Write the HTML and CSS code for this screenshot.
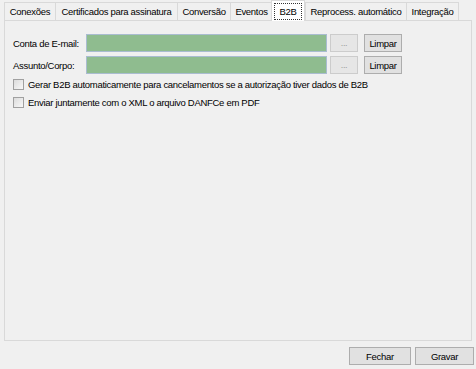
FILE: index.html
```html
<!DOCTYPE html>
<html>
<head>
<meta charset="utf-8">
<link rel="stylesheet" href="styles.css">
</head>
<body>
<div class="window">
  <div class="tabs">
    <div class="tab w-con">Conexões</div>
    <div class="tab w-cert">Certificados para assinatura</div>
    <div class="tab w-conv">Conversão</div>
    <div class="tab w-ev">Eventos</div>
    <div class="tab active"><span class="focus">B2B</span></div>
    <div class="tab w-rep">Reprocess. automático</div>
    <div class="tab w-int">Integração</div>
  </div>
  <div class="panel">
    <div class="row">
      <label class="label">Conta de E-mail:</label>
      <div class="input"></div>
      <button class="btn dots">...</button>
      <button class="btn clear">Limpar</button>
    </div>
    <div class="row">
      <label class="label">Assunto/Corpo:</label>
      <div class="input"></div>
      <button class="btn dots">...</button>
      <button class="btn clear">Limpar</button>
    </div>
    <div class="check first"><span class="box"></span>Gerar B2B automaticamente para cancelamentos se a autorização tiver dados de B2B</div>
    <div class="check"><span class="box"></span>Enviar juntamente com o XML o arquivo DANFCe em PDF</div>
  </div>
  <div class="footer">
    <button class="btn big">Fechar</button>
    <button class="btn big gravar">Gravar</button>
  </div>
</div>
</body>
</html>
```

FILE: styles.css
```css
* { box-sizing: border-box; }
html, body { margin: 0; padding: 0; }
body {
  background: #f0f0f0;
  font-family: "Liberation Sans", Arial, sans-serif;
  font-size: 9.5px;
  letter-spacing: -0.3px;
  color: #000;
}
.window {
  width: 476px;
  height: 369px;
  padding: 0 4px 0 4px;
  display: flex;
  flex-direction: column;
}
.tabs {
  display: flex;
  height: 20px;
  padding-top: 2px;
  align-items: flex-end;
  position: relative;
  z-index: 1;
}
.tab {
  height: 18px;
  border: 1px solid #d9d9d9;
  border-bottom: none;
  margin-right: -1px;
  background: #f0f0f0;
  line-height: 17px;
  white-space: nowrap;
  text-align: center;
  overflow: hidden;
}
.w-con { width: 52px; }
.w-cert { width: 123px; }
.w-conv { width: 54px; }
.w-ev { width: 43px; }
.w-rep { width: 102px; }
.w-int { width: 53px; }
.tab.active {
  width: 34px;
  height: 21px;
  margin: 0 0 -1px -1px;
  background: #fff;
  padding: 2px 2px 0 2px;
  border-color: #d9d9d9;
  position: relative;
}
.focus {
  display: block;
  border: 1px dotted #333;
  line-height: 15px;
}
.panel {
  height: 321px;
  border: 1px solid #d9d9d9;
  background: #f0f0f0;
  padding: 13px 0 0 7px;
  display: flex;
  flex-direction: column;
}
.row {
  display: flex;
  align-items: center;
  height: 18px;
  margin-bottom: 4px;
}
.label {
  width: 74px;
  padding-left: 1px;
  white-space: nowrap;
}
.input {
  width: 241px;
  height: 18px;
  background: #8fbc8f;
  border: 1px solid #a9bcd0;
}
.btn {
  font-family: "Liberation Sans", Arial, sans-serif;
  font-size: 9.5px;
  letter-spacing: -0.3px;
  height: 18px;
  background: #e1e1e1;
  border: 1px solid #adadad;
  padding: 0;
  color: #000;
}
.dots {
  width: 28px;
  margin-left: 3px;
  border-color: #cccccc;
  background: #e6e6e6;
  color: #9a9a9a;
  font-size: 9px;
}
.clear {
  width: 38px;
  margin-left: 6px;
}
.check {
  display: flex;
  align-items: center;
  height: 12px;
  margin-bottom: 6px;
  padding-left: 1px;
  white-space: nowrap;
}
.check.first { margin-top: 0; }
.box {
  width: 11px;
  height: 11px;
  border: 1px solid #a0a0a0;
  background: linear-gradient(135deg, #dcdcdc, #f8f8f8);
  margin-right: 4px;
}
.footer {
  display: flex;
  justify-content: flex-end;
  padding-top: 6px;
  margin-right: -2px;
}
.big {
  width: 62px;
  height: 18px;
}
.gravar {
  width: 59px;
  margin-left: 4px;
}
```
